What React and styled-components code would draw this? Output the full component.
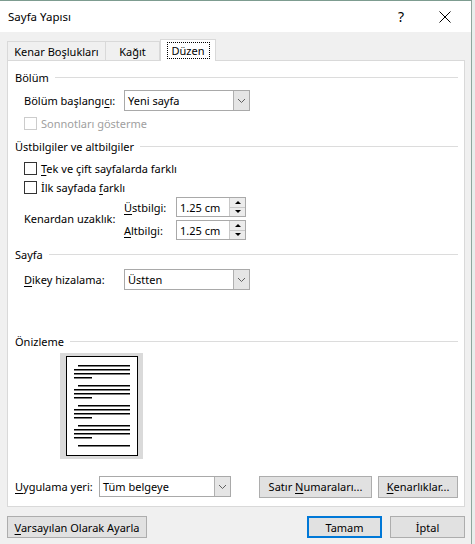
import React from "react";
import styled, { createGlobalStyle } from "styled-components";

const GlobalStyle = createGlobalStyle`
  html, body {
    margin: 0;
    padding: 0;
    background: #e9eeec;
  }
  body {
    font-family: "Noto Sans", "Open Sans", sans-serif;
    font-size: 11px;
    color: #000;
  }
`;

const Screen = styled.div`
  display: flex;
  width: 475px;
  height: 544px;
  overflow: hidden;
`;

const Dialog = styled.div`
  width: 472px;
  height: 544px;
  flex-shrink: 0;
  background: #f0f0f0;
  border-top: 1px solid #7d9c90;
  border-right: 1px solid #8fa79d;
  box-sizing: border-box;
  display: flex;
  flex-direction: column;
`;

const TitleBar = styled.div`
  height: 31px;
  background: #fff;
  display: flex;
  align-items: center;
  padding: 0 4px 0 8px;
`;

const Title = styled.div`
  flex: 1;
  font-size: 11.5px;
`;

const TitleButton = styled.div`
  width: 44px;
  display: flex;
  justify-content: center;
  align-items: center;
  font-size: 14px;
`;

const Tabs = styled.div`
  display: flex;
  align-items: flex-end;
  margin: 7px 0 0 7px;
  height: 22px;
  position: relative;
  z-index: 1;
`;

const Tab = styled.div`
  box-sizing: border-box;
  height: ${({ $active }) => ($active ? "22px" : "20px")};
  width: ${({ $w }) => $w}px;
  border: 1px solid #d9d9d9;
  border-bottom: ${({ $active }) => ($active ? "none" : "1px solid #d9d9d9")};
  border-left: ${({ $first, $active }) =>
    $first || $active ? "1px solid #d9d9d9" : "none"};
  background: ${({ $active }) => ($active ? "#fff" : "#f0f0f0")};
  display: flex;
  align-items: center;
  justify-content: center;
  padding-top: ${({ $active }) => ($active ? "0" : "1px")};
`;

const Focus = styled.span`
  border: 1px dotted #000;
  padding: 1px 4px;
  line-height: 13px;
`;

const Panel = styled.div`
  margin-left: 7px;
  width: 458px;
  height: 447px;
  box-sizing: border-box;
  background: #fff;
  border: 1px solid #d9d9d9;
  margin-top: -1px;
  padding: 0 6px 0 7px;
  display: flex;
  flex-direction: column;
`;

const Header = styled.div`
  display: flex;
  align-items: center;
  height: 16px;
  margin-top: ${({ $mt }) => $mt}px;
  gap: 6px;
  &::after {
    content: "";
    flex: 1;
    height: 1px;
    background: #dcdcdc;
  }
`;

const Row = styled.div`
  display: flex;
  align-items: center;
  height: ${({ $h }) => $h || 21}px;
  margin-top: ${({ $mt }) => $mt}px;
  padding-left: ${({ $indent }) => ($indent ? 9 : 0)}px;
`;

const Label = styled.div`
  width: ${({ $w }) => $w}px;
  flex-shrink: 0;
  white-space: nowrap;
`;

const Select = styled.div`
  box-sizing: border-box;
  width: ${({ $w }) => $w}px;
  height: 21px;
  border: 1px solid #a9a9a9;
  display: flex;
  align-items: center;
  padding-left: 3px;
  background: #fff;
`;

const SelectText = styled.div`
  flex: 1;
`;

const DropButton = styled.div`
  width: 16px;
  height: 19px;
  box-sizing: border-box;
  background: #e5e5e5;
  border-left: 1px solid #b0b0b0;
  display: flex;
  align-items: center;
  justify-content: center;
`;

const Check = styled.div`
  display: flex;
  align-items: center;
  height: 13px;
  margin-top: ${({ $mt }) => $mt}px;
  padding-left: 9px;
  white-space: nowrap;
  color: ${({ $disabled }) => ($disabled ? "#a0a0a0" : "#000")};
`;

const Box = styled.div`
  width: 13px;
  height: 13px;
  box-sizing: border-box;
  border: 1px solid ${({ $disabled }) => ($disabled ? "#cccccc" : "#333")};
  background: #fff;
  margin-right: 4px;
`;

const U = styled.span`
  text-decoration: underline;
  text-underline-offset: 2px;
`;

const Distance = styled.div`
  display: flex;
  align-items: center;
  margin-top: 3px;
  height: 43px;
  padding-left: 9px;
`;

const SpinCol = styled.div`
  display: flex;
  flex-direction: column;
  gap: 3px;
`;

const SpinRow = styled.div`
  display: flex;
  align-items: center;
  height: 20px;
`;

const Spin = styled.div`
  box-sizing: border-box;
  width: 70px;
  height: 20px;
  border: 1px solid #a9a9a9;
  display: flex;
  align-items: stretch;
  padding-left: 3px;
`;

const SpinText = styled.div`
  flex: 1;
  display: flex;
  align-items: center;
`;

const SpinButtons = styled.div`
  width: 15px;
  display: flex;
  flex-direction: column;
  border-left: 1px solid #c8c8c8;
`;

const SpinHalf = styled.div`
  flex: 1;
  background: #ececec;
  display: flex;
  align-items: center;
  justify-content: center;
  border-bottom: ${({ $top }) => ($top ? "1px solid #c8c8c8" : "none")};
`;

const Arrow = styled.div`
  width: 0;
  height: 0;
  border-left: 3px solid transparent;
  border-right: 3px solid transparent;
  ${({ $up }) =>
    $up ? "border-bottom: 3px solid #000;" : "border-top: 3px solid #000;"}
`;

const PreviewWrap = styled.div`
  margin: 4px 0 0 45px;
  width: 83px;
  height: 106px;
  background: #dadada;
  display: flex;
  justify-content: center;
  padding-top: 3px;
  box-sizing: border-box;
`;

const Bottom = styled.div`
  display: flex;
  margin-left: auto;
  gap: 6px;
`;

const Button = styled.div`
  box-sizing: border-box;
  width: ${({ $w }) => $w}px;
  height: 22px;
  background: #e1e1e1;
  border: ${({ $default }) =>
    $default ? "2px solid #0078d7" : "1px solid #adadad"};
  display: flex;
  align-items: center;
  justify-content: center;
  white-space: nowrap;
`;

const Footer = styled.div`
  display: flex;
  align-items: center;
  margin: 9px 0 0 7px;
  width: 458px;
`;

const FooterRight = styled.div`
  display: flex;
  margin-left: auto;
  gap: 8px;
`;

function Chevron() {
  return (
    <svg width="9" height="6" viewBox="0 0 9 6">
      <path d="M1 1 L4.5 4.5 L8 1" fill="none" stroke="#606060" strokeWidth="1" />
    </svg>
  );
}

function Dropdown({ w, children }) {
  return (
    <Select $w={w}>
      <SelectText>{children}</SelectText>
      <DropButton>
        <Chevron />
      </DropButton>
    </Select>
  );
}

function Spinner({ value }) {
  return (
    <Spin>
      <SpinText>{value}</SpinText>
      <SpinButtons>
        <SpinHalf $top>
          <Arrow $up />
        </SpinHalf>
        <SpinHalf>
          <Arrow />
        </SpinHalf>
      </SpinButtons>
    </Spin>
  );
}

function PagePreview() {
  const groups = [0, 20, 40, 60];
  return (
    <svg width="72" height="100" viewBox="0 0 72 100">
      <rect x="0.5" y="0.5" width="71" height="99" fill="#fff" stroke="#000" />
      {groups.map((g) => (
        <g key={g} fill="#000">
          <rect x="12" y={9 + g} width="52" height="1.5" />
          <rect x="8" y={13 + g} width="56" height="1.5" />
          <rect x="8" y={17 + g} width="56" height="1.5" />
          <rect x="8" y={21 + g} width="18" height="1.5" />
        </g>
      ))}
      <rect x="12" y="89" width="52" height="1.5" fill="#000" />
    </svg>
  );
}

export default function App() {
  return (
    <Screen>
      <GlobalStyle />
      <Dialog>
        <TitleBar>
          <Title>Sayfa Yapısı</Title>
          <TitleButton>?</TitleButton>
          <TitleButton>
            <svg width="12" height="12" viewBox="0 0 12 12">
              <path d="M0.5 0.5 L11.5 11.5 M11.5 0.5 L0.5 11.5" stroke="#000" strokeWidth="1" />
            </svg>
          </TitleButton>
        </TitleBar>
        <Tabs>
          <Tab $w={99} $first>
            Kenar Boşlukları
          </Tab>
          <Tab $w={54}>Kağıt</Tab>
          <Tab $w={56} $active>
            <Focus>Düzen</Focus>
          </Tab>
        </Tabs>
        <Panel>
          <Header $mt={8}>Bölüm</Header>
          <Row $mt={5} $indent>
            <Label $w={100}>
              Bölüm başlangı<U>c</U>ı:
            </Label>
            <Dropdown w={126}>Yeni sayfa</Dropdown>
          </Row>
          <Check $mt={6} $disabled>
            <Box $disabled />
            <span>Sonnotları gösterme</span>
          </Check>
          <Header $mt={8}>Üstbilgiler ve altbilgiler</Header>
          <Check $mt={8}>
            <Box />
            <span>
              <U>T</U>ek ve çift sayfalarda farklı
            </span>
          </Check>
          <Check $mt={6}>
            <Box />
            <span>
              İlk sayfada <U>f</U>arklı
            </span>
          </Check>
          <Distance>
            <Label $w={100}>Kenardan uzaklık:</Label>
            <SpinCol>
              <SpinRow>
                <Label $w={52}>
                  <U>Ü</U>stbilgi:
                </Label>
                <Spinner value="1.25 cm" />
              </SpinRow>
              <SpinRow>
                <Label $w={52}>
                  <U>A</U>ltbilgi:
                </Label>
                <Spinner value="1.25 cm" />
              </SpinRow>
            </SpinCol>
          </Distance>
          <Header $mt={6}>Sayfa</Header>
          <Row $mt={7} $indent>
            <Label $w={100}>
              <U>D</U>ikey hizalama:
            </Label>
            <Dropdown w={126}>Üstten</Dropdown>
          </Row>
          <Header $mt={43}>Önizleme</Header>
          <PreviewWrap>
            <PagePreview />
          </PreviewWrap>
          <Row $mt={17}>
            <Label $w={84}>
              <U>U</U>ygulama yeri:
            </Label>
            <Dropdown w={132}>Tüm belgeye</Dropdown>
            <Bottom>
              <Button $w={113}>
                <span>
                  Satır <U>N</U>umaraları...
                </span>
              </Button>
              <Button $w={80}>
                <span>
                  <U>K</U>enarlıklar...
                </span>
              </Button>
            </Bottom>
          </Row>
        </Panel>
        <Footer>
          <Button $w={140}>
            <span>
              <U>V</U>arsayılan Olarak Ayarla
            </span>
          </Button>
          <FooterRight>
            <Button $w={75} $default>
              Tamam
            </Button>
            <Button $w={75}>İptal</Button>
          </FooterRight>
        </Footer>
      </Dialog>
    </Screen>
  );
}
